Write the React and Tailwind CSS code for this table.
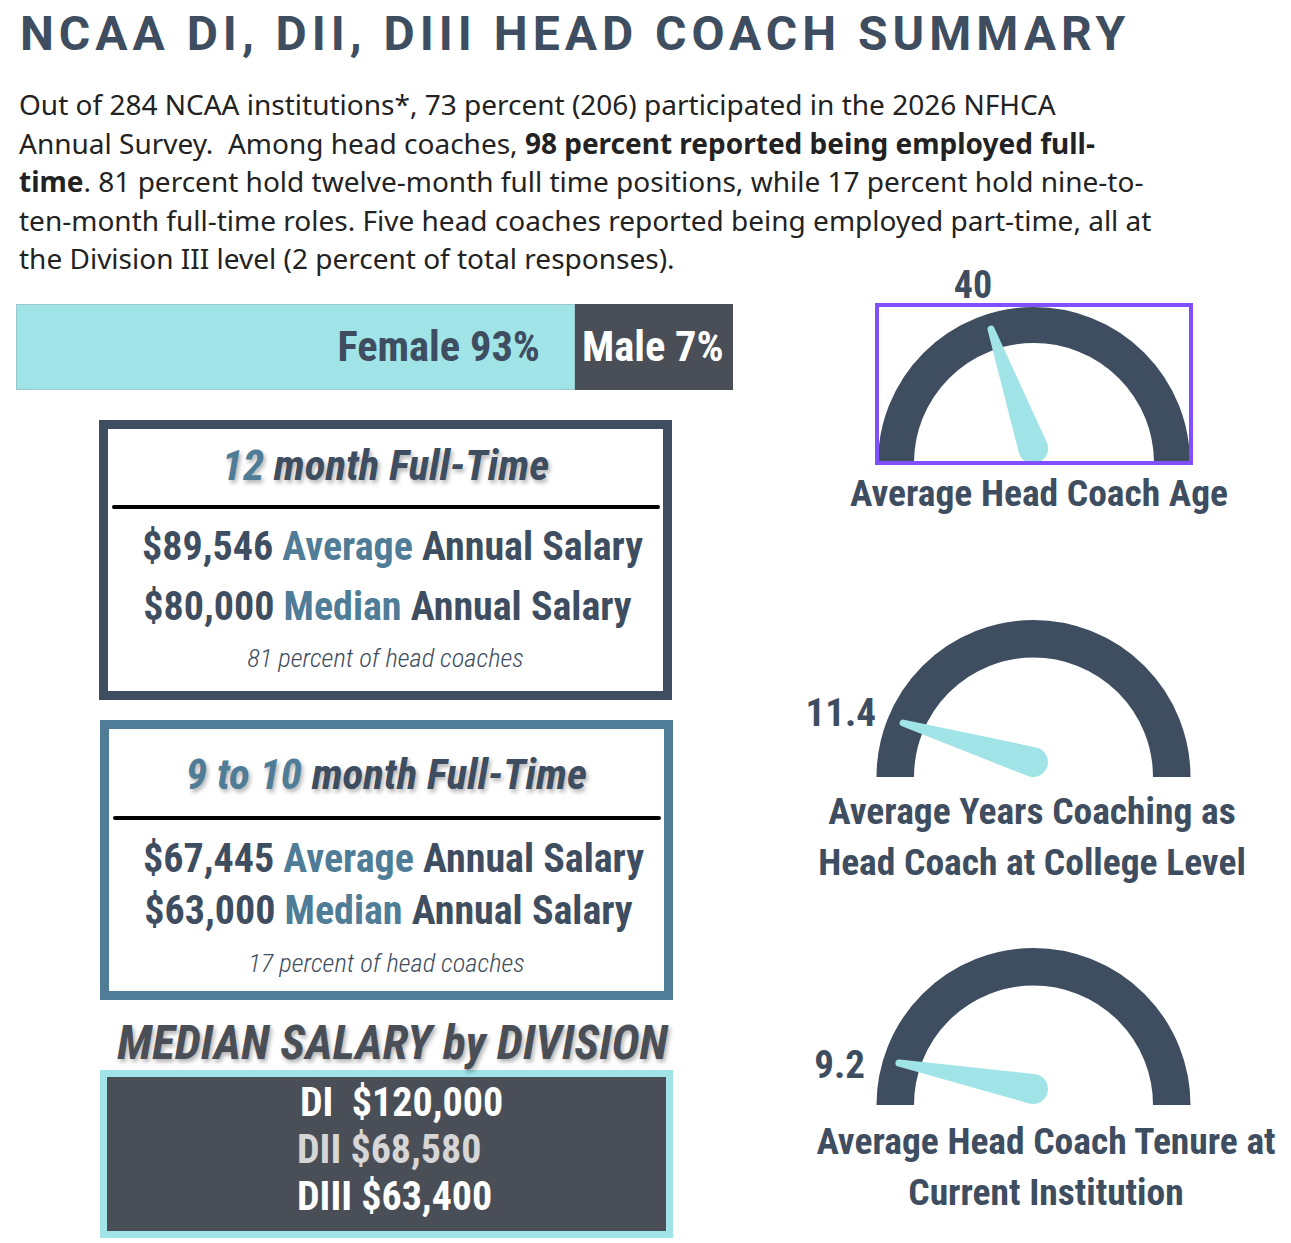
import React from 'react'

const cond = "font-['Roboto_Condensed','Roboto',sans-serif] [font-stretch:condensed]"

// needle: tapered shape from a round base (B, r) to a small round tip (T, rt)
const needlePath = (B, T, r = 15, rt = 3.5) => {
  const dx = T[0] - B[0]
  const dy = T[1] - B[1]
  const len = Math.hypot(dx, dy)
  const nx = -dy / len
  const ny = dx / len
  const p = (P, s, k) => `${(P[0] + nx * s * k).toFixed(2)} ${(P[1] + ny * s * k).toFixed(2)}`
  return `M ${p(B, r, 1)} L ${p(T, rt, 1)} A ${rt} ${rt} 0 0 0 ${p(T, rt, -1)} L ${p(B, r, -1)} A ${r} ${r} 0 1 0 ${p(B, r, 1)} Z`
}

const Gauge = ({ w, h, cx, cy, r, stroke, base, tip }) => (
  <svg width={w} height={h} viewBox={`0 0 ${w} ${h}`} className="block overflow-hidden">
    <path d={`M ${cx - r} ${cy} A ${r} ${r} 0 0 1 ${cx + r} ${cy}`} fill="none" stroke="#3e4d60" strokeWidth={stroke} />
    <path d={needlePath(base, tip)} fill="#a0e4e8" />
  </svg>
)

const SalaryBox = ({ border, first, second, avg, med, note, sp }) => (
  <div className={`w-[573px] h-[280px] border-[9px] ${border} bg-white flex flex-col items-center`}>
    <h3 className={`${cond} ${sp.title} text-[43px] leading-[48px] font-bold italic text-[#3e4d60] [text-shadow:2px_3px_4px_rgba(0,0,0,0.3)]`}>
      <span className="text-[#4f7c97]">{first}</span> {second}
    </h3>
    <div className={`${sp.line} w-[548px] h-[4px] rounded-full bg-black`}></div>
    <div className={`${cond} ${sp.rows} font-bold text-[40px] text-[#3e4d60] flex flex-col items-center`}>
      <p className="ml-[14px]">{avg} <span className="text-[#4f7c97]">Average</span> Annual Salary</p>
      <p className="ml-[4px]">{med} <span className="text-[#4f7c97]">Median</span> Annual Salary</p>
    </div>
    <p className={`${cond} ${sp.note} text-[26.5px] leading-[30px] font-light italic text-[#3e4d60]`}>{note}</p>
  </div>
)

const App = () => {
  return (
    <div className="w-[1291px] h-[1243px] bg-white overflow-hidden">
      <h1 className="font-['Roboto',sans-serif] pl-[20px] pt-[6px] text-[48px] leading-[56px] font-bold tracking-[0.104em] text-[#3e4d60]">
        NCAA DI, DII, DIII HEAD COACH SUMMARY
      </h1>
      <p className="font-['Noto_Sans',sans-serif] pl-[19px] mt-[23px] text-[28px] leading-[38.6px] text-[#222222]">
        Out of 284 NCAA institutions*, 73 percent (206) participated in the 2026 NFHCA<br />
        Annual Survey.&nbsp; Among head coaches, <b>98 percent reported being employed full-<br />time</b>. 81 percent hold twelve-month full time positions, while 17 percent hold nine-to-<br />
        ten-month full-time roles. Five head coaches reported being employed part-time, all at<br />
        the Division III level (2 percent of total responses).
      </p>

      <div className="flex">
        {/* left column */}
        <div className="w-[760px] shrink-0 pt-[26px]">
          <div className={`${cond} ml-[16px] w-[717px] h-[86px] flex font-bold text-[42.5px]`}>
            <div className="w-[559px] h-full bg-[#a0e4e8] border border-[#97c9cd] flex items-center justify-end pr-[34px] text-[#3e4d60]">
              Female 93%
            </div>
            <div className="flex-1 h-full bg-[#4a4f57] flex items-center pl-[7px] text-white">
              Male 7%
            </div>
          </div>

          <div className="ml-[99px] mt-[30px]">
            <SalaryBox
              border="border-[#3e4d60]" first="12" second="month Full-Time" avg="$89,546" med="$80,000" note="81 percent of head coaches"
              sp={{ title: 'mt-[12px]', line: 'mt-[16px]', rows: 'mt-[8px] leading-[60px]', note: 'mt-[6px]' }}
            />
          </div>
          <div className="ml-[100px] mt-[20px]">
            <SalaryBox
              border="border-[#4f7c97]" first="9 to 10" second="month Full-Time" avg="$67,445" med="$63,000" note="17 percent of head coaches"
              sp={{ title: 'mt-[21px]', line: 'mt-[18px]', rows: 'mt-[13px] leading-[52px]', note: 'mt-[11px]' }}
            />
          </div>

          <h2 className={`${cond} ml-[100px] w-[573px] mt-[16px] text-center pl-[12px] text-[47.5px] leading-[54px] font-bold italic text-[#4a4f57] [text-shadow:2px_3px_4px_rgba(0,0,0,0.3)]`}>
            MEDIAN SALARY by DIVISION
          </h2>
          <div className={`${cond} ml-[100px] w-[573px] h-[168px] border-[7px] border-[#a0e4e8] bg-[#4a4f57] pl-[190px] pt-[2px] font-bold text-[40px] leading-[47px] text-white`}>
            <p className="whitespace-pre pl-[3px]">DI  $120,000</p>
            <p className="text-[#d6d6d6]">DII $68,580</p>
            <p>DIII $63,400</p>
          </div>
        </div>

        {/* right column */}
        <div className={`${cond} flex-1 mt-[-12px] font-bold text-[#3e4d60]`}>
          <p className="ml-[163px] w-[100px] text-center text-[38px] leading-[38px]">40</p>
          <div className="ml-[115px] mt-[-1px] w-[318px] h-[162px] border-[4px] border-[#7f50fb]">
            <Gauge w={310} h={154} cx={155} cy={156} r={138} stroke={36} base={[154, 141]} tip={[112, 22]} />
          </div>
          <p className="ml-[79px] w-[400px] text-center mt-[6px] text-[37.5px] leading-[44px]">Average Head Coach Age</p>

          <div className="flex mt-[105px]">
            <p className="w-[116px] text-right mt-[74px] text-[39px] leading-[38px]">11.4</p>
            <Gauge w={315} h={157} cx={157.5} cy={157} r={138.25} stroke={37.5} base={[157, 142]} tip={[27, 103]} />
          </div>
          <p className="ml-[22px] w-[500px] text-center mt-[9px] text-[37.5px] leading-[51px]">
            Average Years Coaching as<br />Head Coach at College Level
          </p>

          <div className="flex mt-[60px]">
            <p className="w-[105px] text-right mt-[98px] text-[39px] leading-[38px] mr-[11px]">9.2</p>
            <Gauge w={315} h={157} cx={157.5} cy={157} r={138.25} stroke={37.5} base={[157, 141]} tip={[23, 115]} />
          </div>
          <p className="ml-[36px] w-[500px] text-center mt-[11px] text-[37.5px] leading-[51px]">
            Average Head Coach Tenure at<br />Current Institution
          </p>
        </div>
      </div>
    </div>
  )
}

export default App
